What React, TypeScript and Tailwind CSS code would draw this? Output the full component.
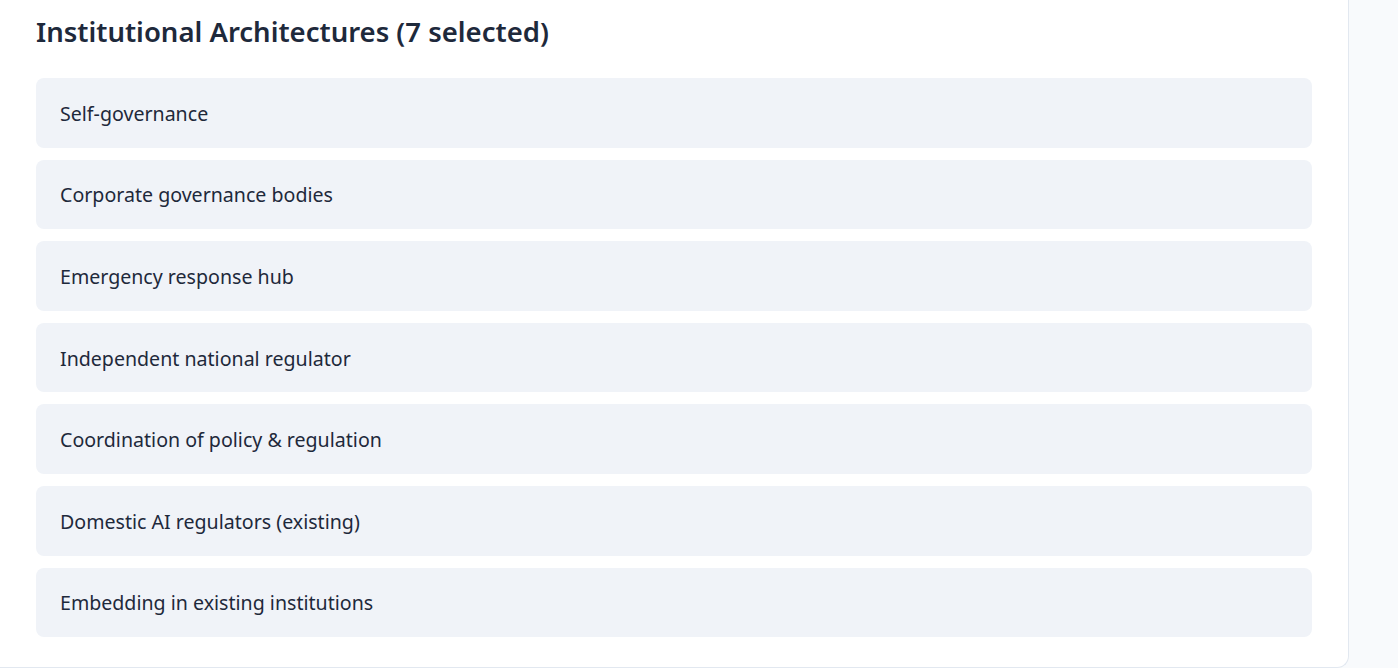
import React from "react"

const items = [
  "Self-governance",
  "Corporate governance bodies",
  "Emergency response hub",
  "Independent national regulator",
  "Coordination of policy & regulation",
  "Domestic AI regulators (existing)",
  "Embedding in existing institutions",
]

export default function App() {
  return (
    <div className="flex h-[668px] w-full bg-[#f8fafc] overflow-hidden" style={{ fontFamily: '"Noto Sans", "Open Sans", sans-serif' }}>
      <section className="w-[1349px] shrink-0 h-[668px] bg-white border-r border-b border-[#e2e8f0] rounded-br-xl px-9 pt-[15px]">
        <h2 className="text-[27.5px] leading-[34px] font-semibold text-[#1e293b] mb-[29px]">
          Institutional Architectures (7 selected)
        </h2>
        <div className="flex flex-col gap-3 w-[1276px]">
          {items.map((item) => (
            <div key={item} className="bg-[#f0f3f8] rounded-lg px-6 pt-[2px] flex items-center h-[69.6px] text-[19.6px] leading-[24px] text-[#1e293b]">
              {item}
            </div>
          ))}
        </div>
      </section>
    </div>
  )
}
